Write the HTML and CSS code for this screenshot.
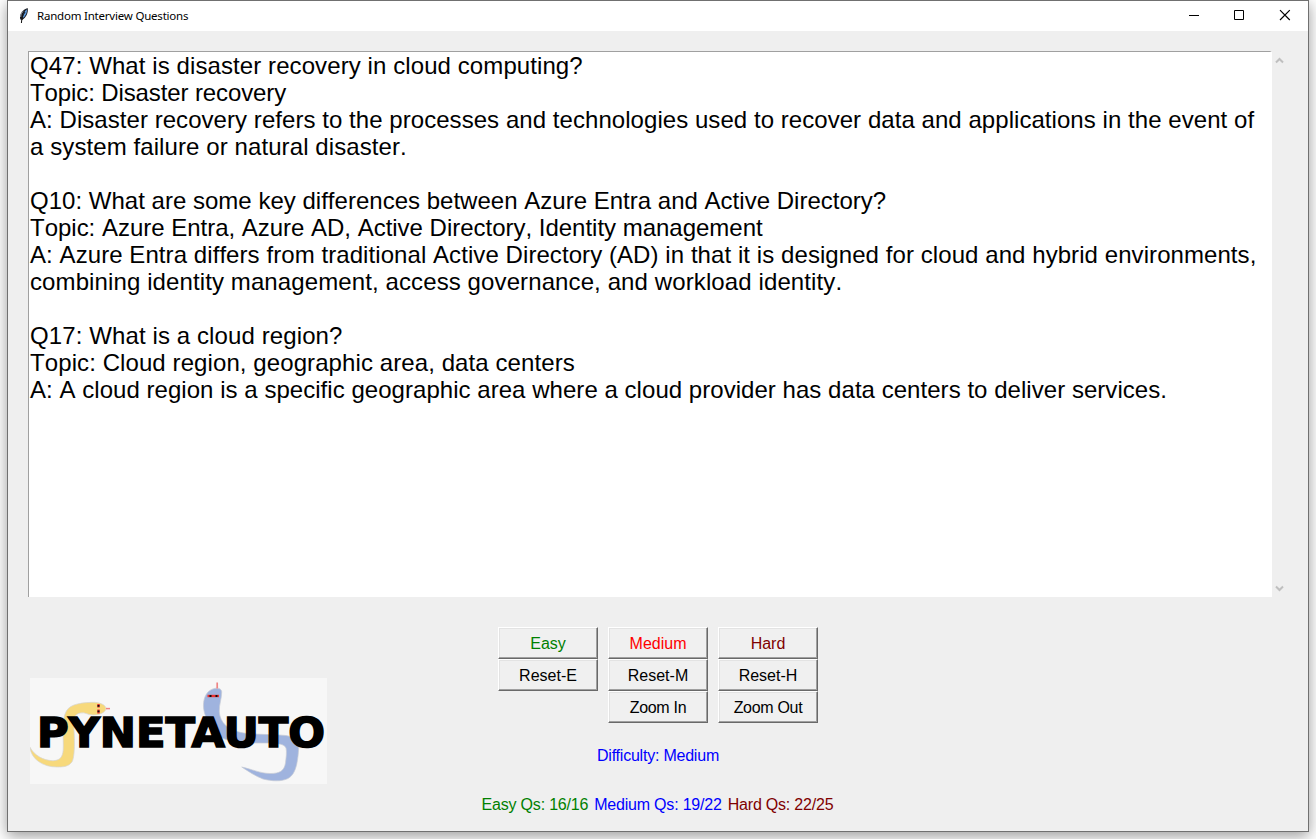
FILE: index.html
```html
<!DOCTYPE html>
<html lang="en">
<head>
<meta charset="utf-8">
<title>Random Interview Questions</title>
<link rel="stylesheet" href="styles.css">
</head>
<body>
<main class="window">
  <header class="titlebar">
    <svg class="feather" width="12" height="18" viewBox="0 0 12 18"><path d="M2.400 12.500C0.800 8.500 3.500 3 9.600 1C10.600 5 8.500 10 4.200 13Z" fill="#17191f"/><path d="M4.600 10.800C5 7 6.500 4 9 2.200C9.200 6 7.700 9 4.600 11.200Z" fill="#5d9be0"/><path d="M2.700 10C2.700 7 4 5 5.500 4" fill="none" stroke="#b9c3cf" stroke-width=".8"/><path d="M7 5C5 8 3.600 11 3.400 16" fill="none" stroke="#111" stroke-width="1"/></svg>
    <h1 class="title">Random Interview Questions</h1>
    <svg class="controls" width="104" height="12" viewBox="0 0 104 12" fill="none" stroke="#000"><path d="M0 6.500h10M45.500 1.500h9v9h-9z"/><path d="M91 1.200l9.800 9.800M100.800 1.200l-9.800 9.800" stroke-width="1.200"/></svg>
  </header>
  <section class="content">
    <div class="reader">
      <div class="text">
        <p class="l1">Q47: What is disaster recovery in cloud computing?</p>
        <p class="l2">Topic: Disaster recovery</p>
        <p class="l3">A: Disaster recovery refers to the processes and technologies used to recover data and applications in the event of</p>
        <p class="l4">a system failure or natural disaster.</p>
        <p class="gap"></p>
        <p class="l5">Q10: What are some key differences between Azure Entra and Active Directory?</p>
        <p class="l6">Topic: Azure Entra, Azure AD, Active Directory, Identity management</p>
        <p class="l7">A: Azure Entra differs from traditional Active Directory (AD) in that it is designed for cloud and hybrid environments,</p>
        <p class="l8">combining identity management, access governance, and workload identity.</p>
        <p class="gap"></p>
        <p class="l9">Q17: What is a cloud region?</p>
        <p class="l10">Topic: Cloud region, geographic area, data centers</p>
        <p class="l11">A: A cloud region is a specific geographic area where a cloud provider has data centers to deliver services.</p>
      </div>
      <div class="scrollbar">
        <svg width="9" height="7" viewBox="0 0 9 7"><path d="M1 5.500L4.500 2L8 5.500" fill="none" stroke="#bfbfbf" stroke-width="2"/></svg>
        <svg width="9" height="7" viewBox="0 0 9 7"><path d="M1 1.500L4.500 5L8 1.500" fill="none" stroke="#bfbfbf" stroke-width="2"/></svg>
      </div>
    </div>
    <div class="lower">
      <svg class="logo" width="297" height="106" viewBox="0 0 297 106">
        <rect width="297" height="106" fill="#f7f7f7"/>
        <path d="M0 69.300C4 77 13 82.500 23 82.700C31 82.500 33.500 78 33.300 68C33.300 57 32 45 35 36C38 27 47 25 61.700 24.300C70 24 76 27 76 30.700C75 35 69 37 63 37C57 37 56 34 50 35C43 37 43 42 44 52C44.500 62 45 76 42.500 83C39 89 33 89 26.700 89C13 89 1 81 0 69.300Z" fill="#f7d97c" stroke="#d5d5d5" stroke-width=".7"/>
        <path d="M76 30.600h4" stroke="#ef8585" stroke-width="1.500"/>
        <path d="M68.500 26v3.600M68.500 31.500v4" stroke="#ef3030" stroke-width="2.400"/><path d="M68.500 27v1.700M68.500 32.500v1.700" stroke="#111" stroke-width="2"/>
        <path d="M178.300 13.700C182 10 191 8 191.700 13.700C192 20 189 26 189.300 34C190 45 199 52 210 54.300C222 57 241 56 256 57.500C266 59 269 63 268.700 70C268 80 267 96 258 100.500C251 104 241 103 233 101C225 98 218 93 211.700 89C221 91 231 95.500 240 95.500C250 95.500 254 93 255.500 85C256 80 257 74 256 70C254 65 244 65 232 65C216 65 200 65 190 58.700C181 53 179 46 175.500 38C172 29 173 19 178.300 13.700Z" fill="#9fb3de" stroke="#c7cbd5" stroke-width=".7"/>
        <path d="M187.200 4.500v6" stroke="#ef8585" stroke-width="1.700"/>
        <path d="M177.500 18h11.500" stroke="#ef3030" stroke-width="2.400"/><path d="M179.500 18h2M185.500 18h2" stroke="#111" stroke-width="2"/>
        <text class="wordmark" x="6.900" y="69" textLength="288" lengthAdjust="spacingAndGlyphs">PYNETAUTO</text>
      </svg>
      <div class="center">
        <div class="buttons">
          <button class="btn easy">Easy</button><button class="btn medium">Medium</button><button class="btn hard">Hard</button>
          <button class="btn">Reset-E</button><button class="btn">Reset-M</button><button class="btn">Reset-H</button>
          <button class="btn zoom-in">Zoom In</button><button class="btn zoom-out">Zoom Out</button>
        </div>
        <p class="difficulty">Difficulty: Medium</p>
        <div class="counts"><span class="easy">Easy Qs: 16/16</span><span class="blue">Medium Qs: 19/22</span><span class="hard">Hard Qs: 22/25</span></div>
      </div>
    </div>
  </section>
</main>
</body>
</html>
```
FILE: styles.css
```css
* { box-sizing: border-box; }
body { margin: 0; height: 839px; overflow: hidden; background: #fff; font-family: "Liberation Sans", Arial, sans-serif; }
p, h1 { margin: 0; font-weight: 400; }
.window { width: 1302px; height: 832px; margin: 0 7px; border: 1px solid #707070; background: #efefef; box-shadow: 0 4px 14px rgba(0,0,0,.4); }
.titlebar { height: 30px; background: #fff; display: flex; align-items: center; padding: 0 17px 0 10px; }
.feather { flex: none; margin-top: -1px; }
.title { margin-left: 7px; font: 11.500px/16px "Noto Sans", sans-serif; letter-spacing: -.21px; white-space: nowrap; }
.controls { margin-left: auto; margin-right: -2px; margin-top: -2px; }
.content { padding: 20px 20px 0; }
.reader { display: flex; height: 546px; }
.text { width: 1244px; border-top: 1px solid #a0a0a0; border-left: 1px solid #a0a0a0; border-right: 2px solid #fff; background: #fff; padding: 0 1px; font-size: 24px; line-height: 27px; white-space: nowrap; color: #000; font-kerning: none; }
.text p { height: 27px; }
.l1, .l4, .l10 { letter-spacing: .09px; }
.l2 { letter-spacing: -.11px; }
.l3 { letter-spacing: .053px; }
.l5 { letter-spacing: .015px; }
.l6 { letter-spacing: -.015px; }
.l7 { letter-spacing: .072px; }
.l8, .l9 { letter-spacing: .107px; }
.l11 { letter-spacing: .04px; }
.scrollbar { flex: 1; display: flex; flex-direction: column; justify-content: space-between; padding: 6px 0 5px 3px; }
.scrollbar svg { display: block; }
.lower { display: flex; padding-left: 2px; }
.logo { display: block; margin-top: 81px; }
.wordmark { font: bold 41px "DejaVu Sans", sans-serif; fill: #000; stroke: #000; stroke-width: 1.600px; }
.center { width: 360px; margin-left: 149px; padding-top: 30px; display: flex; flex-direction: column; align-items: center; font-size: 16px; }
.buttons { display: grid; grid-template-columns: repeat(3, 100px); grid-auto-rows: 32px; column-gap: 10px; margin-left: 4px; }
.btn { padding: 2px 0 0; border: 1px solid; border-color: #fff #696969 #696969 #fff; box-shadow: inset -1px -1px #a0a0a0, inset 1px 1px #e3e3e3; background: #f0f0f0; font: 16px/18px "Liberation Sans", Arial, sans-serif; color: #000; border-radius: 0; }
.zoom-in { grid-column: 2; }
.zoom-in, .zoom-out { letter-spacing: -.3px; }
.easy, .btn.easy { color: #008000; }
.btn.medium { color: #f00; }
.hard, .btn.hard { color: #800000; }
.blue { color: #00f; }
.difficulty { margin-top: 23px; line-height: 20px; color: #00f; margin-left: 4px; white-space: nowrap; letter-spacing: -.22px; }
.counts { display: flex; gap: 6px; margin-top: 29px; margin-left: 3px; line-height: 20px; white-space: nowrap; letter-spacing: -.2px; }
```
